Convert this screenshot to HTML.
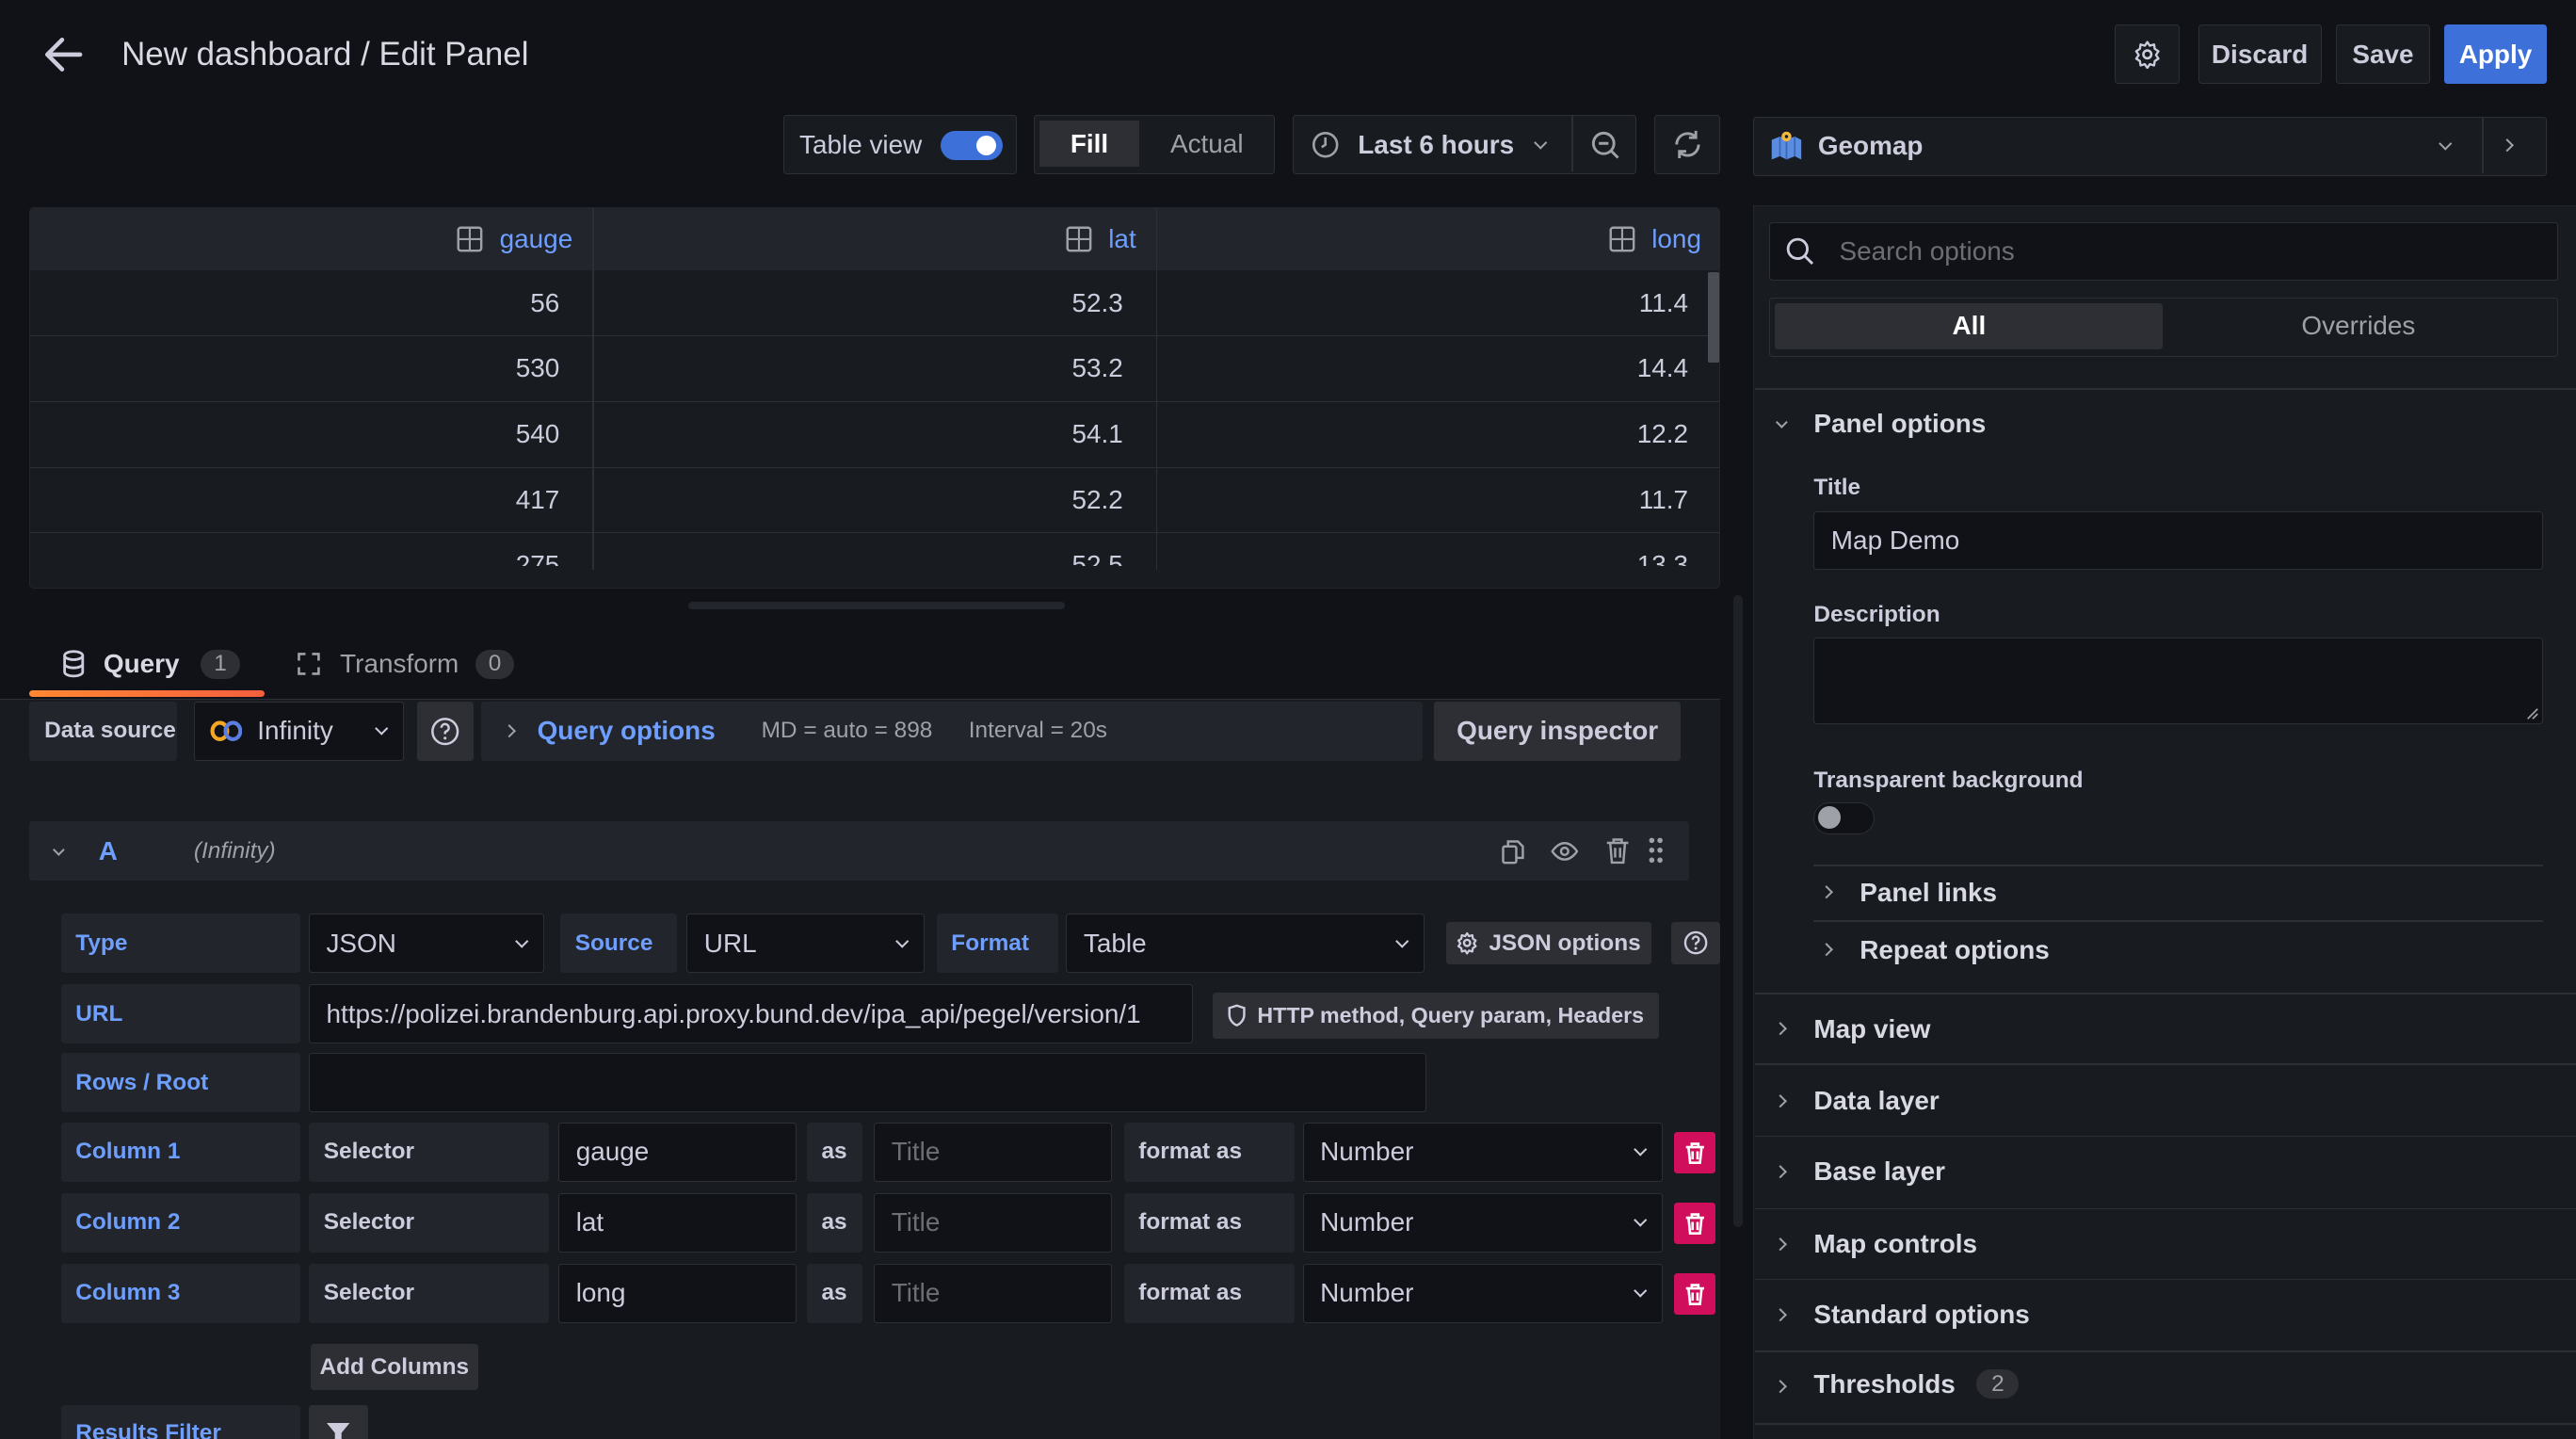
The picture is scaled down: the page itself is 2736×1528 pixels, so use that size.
<!DOCTYPE html>
<html><head><meta charset="utf-8">
<style>
html,body{margin:0;padding:0;background:#111217;overflow:hidden;width:2736px;height:1528px}
#r{zoom:1.7449;position:relative;width:1568px;height:876px;font-family:"Liberation Sans",sans-serif;color:#ccccdc;font-size:16px}
#r div{position:absolute;box-sizing:border-box}
.c{display:flex;align-items:center}
.btn{background:#181b1f;border:1px solid #2c2f36;border-radius:2px;justify-content:center}
.lbl{background:#22252b;border-radius:2px;color:#6e9fff;font-size:14px;font-weight:bold;padding-left:9px}
.wl{background:#22252b;border-radius:2px;color:#ccccdc;font-size:14px;font-weight:bold;padding-left:9px}
.inp{background:#111217;border:1px solid #2c2f36;border-radius:2px;padding-left:10px;font-size:16px}
.gb{background:#2d2f35;border-radius:2px;font-size:14px;font-weight:bold;justify-content:center;color:#ccccdc}
.chev{position:absolute;right:10px;top:50%;width:6px;height:6px;border-right:1.5px solid #ccccdc;border-bottom:1.5px solid #ccccdc;transform:translateY(-70%) rotate(45deg)}
.rc{width:6px;height:6px;border-right:1.5px solid #9fa1a8;border-bottom:1.5px solid #9fa1a8;transform:rotate(-45deg)}
.hl{height:1px;background:#2c2f36}
.del{background:#d10e5c;border-radius:2px;justify-content:center}
.row{justify-content:flex-end;padding-right:20px;font-size:16px;border-bottom:1px solid #2c2f36}
.sec{font-size:16px;font-weight:bold;color:#d8d9e3}
</style></head><body><div id="r">

<!-- header -->
<div style="left:26px;top:21px"><svg width="26" height="24" viewBox="0 0 26 24"><path d="M23 12H4M12 3 3 12l9 9" stroke="#ccccdc" stroke-width="2.6" fill="none" stroke-linecap="round" stroke-linejoin="round"/></svg></div>
<div style="left:74px;top:22px;font-size:20px;color:#d8d9e3">New dashboard / Edit Panel</div>
<div class="c btn" style="left:1287px;top:15px;width:40px;height:36px"><svg width="18" height="18" viewBox="0 0 24 24"><circle cx="12" cy="12" r="3.2" fill="none" stroke="#ccccdc" stroke-width="2"/><path d="M12 2l2 3 3.5-1 .5 3.5 3 2-2 3 2 3-3 2-.5 3.5-3.5-1-2 3-2-3-3.5 1-.5-3.5-3-2 2-3-2-3 3-2 .5-3.5 3.5 1z" fill="none" stroke="#ccccdc" stroke-width="1.8" stroke-linejoin="round"/></svg></div>
<div class="c btn" style="left:1338px;top:15px;width:75px;height:36px;font-weight:bold;color:#ccccdc">Discard</div>
<div class="c btn" style="left:1422px;top:15px;width:57px;height:36px;font-weight:bold">Save</div>
<div class="c" style="left:1488px;top:15px;width:62px;height:36px;background:#3d71d9;border-radius:2px;justify-content:center;color:#fff;font-weight:bold">Apply</div>

<!-- toolbar -->
<div class="c btn" style="left:477px;top:70px;width:142px;height:36px;justify-content:flex-start;padding-left:9px">Table view<div style="left:95px;top:9px;width:38px;height:18px;border-radius:9px;background:#3d71d9"><div style="left:22px;top:3px;width:12px;height:12px;border-radius:6px;background:#fff"></div></div></div>
<div class="btn" style="left:629px;top:70px;width:147px;height:36px"><div class="c" style="left:3px;top:3px;width:61px;height:28px;background:#2d2f35;justify-content:center;font-weight:bold;color:#fff">Fill</div><div class="c" style="left:70px;top:3px;width:70px;height:28px;justify-content:center;color:#9fa1a8">Actual</div></div>
<div class="c btn" style="left:787px;top:70px;width:209px;height:36px;justify-content:flex-start;padding-left:10px;font-weight:bold;color:#ccccdc"><svg width="18" height="18" viewBox="0 0 24 24" style="margin-right:11px"><circle cx="12" cy="12" r="9.5" fill="none" stroke="#9fa1a8" stroke-width="2"/><path d="M12 6v6l-3 2" stroke="#9fa1a8" stroke-width="2" fill="none"/></svg>Last 6 hours<div class="chev" style="left:147px;right:auto;border-color:#9fa1a8"></div><div style="left:169px;top:0;width:1px;height:34px;background:#2c2f36"></div><svg style="position:absolute;left:180px;top:8px" width="20" height="20" viewBox="0 0 24 24"><circle cx="10.5" cy="10.5" r="7.5" fill="none" stroke="#9fa1a8" stroke-width="2"/><path d="M7 10.5h7M16 16l5 5" stroke="#9fa1a8" stroke-width="2"/></svg></div>
<div class="c btn" style="left:1007px;top:70px;width:40px;height:36px"><svg width="20" height="20" viewBox="0 0 24 24"><path d="M4 12a8 8 0 0 1 14-5.3M20 12a8 8 0 0 1-14 5.3M18 2v5h-5M6 22v-5h5" fill="none" stroke="#9fa1a8" stroke-width="2"/></svg></div>
<div class="c btn" style="left:1067px;top:71px;width:483px;height:36px;justify-content:flex-start;padding-left:10px;font-weight:bold;color:#ccccdc"><svg width="20" height="20" viewBox="0 0 20 20" style="margin-right:9px"><path d="M1 6l5-2 4 2 5-2 4 2v12l-4-2-5 2-4-2-5 2z" fill="#5a8de0"/><path d="M6 4v12M10 6v12M15 4v12" stroke="#3a66b5" stroke-width="1"/><circle cx="10" cy="4" r="3" fill="#f5b73b"/><circle cx="10" cy="4" r="1" fill="#181b1f"/></svg>Geomap<div class="chev" style="left:418px;right:auto;border-color:#9fa1a8"></div><div style="left:443px;top:0;width:1px;height:34px;background:#2c2f36"></div><div class="rc" style="left:456px;top:14px"></div></div>

<!-- table -->
<div style="left:18px;top:126px;width:1029px;height:232px;background:#181b1f;border:1px solid #22252b;border-radius:3px;overflow:hidden">
 <div style="left:0;top:0;width:1029px;height:38px;background:#22252b"></div>
 <div style="left:342px;top:0;width:1px;height:220px;background:#2c2f36"></div>
 <div style="left:685px;top:0;width:1px;height:220px;background:#2c2f36"></div>
 <div class="c" style="left:0;top:0;width:342px;height:38px;justify-content:flex-end;padding-right:12px;color:#6e9fff"><svg width="16" height="16" viewBox="0 0 16 16" style="margin-right:10px"><rect x="1" y="1" width="14" height="14" rx="1.5" fill="none" stroke="#9fa1a8" stroke-width="1.4"/><path d="M8 1v14M1 8h14" stroke="#9fa1a8" stroke-width="1.2"/></svg>gauge</div>
 <div class="c" style="left:343px;top:0;width:342px;height:38px;justify-content:flex-end;padding-right:12px;color:#6e9fff"><svg width="16" height="16" viewBox="0 0 16 16" style="margin-right:10px"><rect x="1" y="1" width="14" height="14" rx="1.5" fill="none" stroke="#9fa1a8" stroke-width="1.4"/><path d="M8 1v14M1 8h14" stroke="#9fa1a8" stroke-width="1.2"/></svg>lat</div>
 <div class="c" style="left:686px;top:0;width:343px;height:38px;justify-content:flex-end;padding-right:12px;color:#6e9fff"><svg width="16" height="16" viewBox="0 0 16 16" style="margin-right:10px"><rect x="1" y="1" width="14" height="14" rx="1.5" fill="none" stroke="#9fa1a8" stroke-width="1.4"/><path d="M8 1v14M1 8h14" stroke="#9fa1a8" stroke-width="1.2"/></svg>long</div>
 <div style="left:0;top:38px;width:1029px;height:180px;overflow:hidden">
  <div class="c row" style="left:0;top:0;width:342px;height:40px">56</div><div class="c row" style="left:343px;top:0;width:342px;height:40px">52.3</div><div class="c row" style="left:686px;top:0;width:343px;height:40px">11.4</div>
  <div class="c row" style="left:0;top:40px;width:342px;height:40px">530</div><div class="c row" style="left:343px;top:40px;width:342px;height:40px">53.2</div><div class="c row" style="left:686px;top:40px;width:343px;height:40px">14.4</div>
  <div class="c row" style="left:0;top:80px;width:342px;height:40px">540</div><div class="c row" style="left:343px;top:80px;width:342px;height:40px">54.1</div><div class="c row" style="left:686px;top:80px;width:343px;height:40px">12.2</div>
  <div class="c row" style="left:0;top:120px;width:342px;height:40px">417</div><div class="c row" style="left:343px;top:120px;width:342px;height:40px">52.2</div><div class="c row" style="left:686px;top:120px;width:343px;height:40px">11.7</div>
  <div class="c row" style="left:0;top:160px;width:342px;height:40px;align-items:flex-start;padding-top:10px">275</div><div class="c row" style="left:343px;top:160px;width:342px;height:40px;align-items:flex-start;padding-top:10px">52.5</div><div class="c row" style="left:686px;top:160px;width:343px;height:40px;align-items:flex-start;padding-top:10px">13.3</div>
 </div>
 <div style="left:1021px;top:39px;width:7px;height:55px;background:#4b4d55;border-radius:1px"></div>
</div>
<div style="left:419px;top:366px;width:229px;height:5px;background:#22252b;border-radius:3px"></div>

<!-- tabs -->
<div class="c" style="left:38px;top:395px;font-size:16px;font-weight:bold;color:#d8d9e3"><svg width="14" height="17" viewBox="0 0 14 17" style="margin-right:11px"><ellipse cx="7" cy="3.5" rx="5.5" ry="2.5" fill="none" stroke="#ccccdc" stroke-width="1.6"/><path d="M1.5 3.5v10c0 1.4 2.5 2.5 5.5 2.5s5.5-1.1 5.5-2.5v-10M1.5 8.5c0 1.4 2.5 2.5 5.5 2.5s5.5-1.1 5.5-2.5" fill="none" stroke="#ccccdc" stroke-width="1.6"/></svg>Query<span style="margin-left:13px;background:#2d2f35;border-radius:10px;padding:1px 8px;font-size:14px;font-weight:normal;color:#9fa1a8">1</span></div>
<div class="c" style="left:180px;top:395px;font-size:16px;color:#9fa1a8"><svg width="16" height="16" viewBox="0 0 16 16" style="margin-right:11px"><path d="M2 6V2h4M14 10v4h-4M10 2h4v4M6 14H2v-4" fill="none" stroke="#9fa1a8" stroke-width="1.5"/></svg>Transform<span style="margin-left:10px;background:#2d2f35;border-radius:10px;padding:1px 8px;font-size:14px">0</span></div>
<div style="left:18px;top:420px;width:143px;height:4px;border-radius:2px;background:linear-gradient(90deg,#ff8833,#f55f3e)"></div>

<!-- query editor area -->
<div style="left:0;top:425px;width:1047px;height:451px;background:#181b1f;border-top:1px solid #2c2f36"></div>
<div style="left:1047px;top:360px;width:20px;height:516px;background:#111217"></div>
<div style="left:1055px;top:362px;width:6px;height:385px;background:#1e2126;border-radius:3px"></div>

<div class="c wl" style="left:18px;top:427px;width:90px;height:36px">Data source</div>
<div class="c inp" style="left:118px;top:427px;width:128px;height:36px;padding-left:9px"><svg width="20" height="14" viewBox="0 0 20 14" style="margin-right:9px"><ellipse cx="6" cy="7" rx="4.5" ry="5" fill="none" stroke="#f5a623" stroke-width="2.4"/><ellipse cx="14" cy="7" rx="4.5" ry="5" fill="none" stroke="#5a7de0" stroke-width="2.4"/></svg>Infinity<div class="chev"></div></div>
<div class="c gb" style="left:254px;top:427px;width:34px;height:36px"><svg width="18" height="18" viewBox="0 0 20 20"><circle cx="10" cy="10" r="8.5" fill="none" stroke="#ccccdc" stroke-width="1.6"/><path d="M7.5 7.5a2.5 2.5 0 1 1 3.3 2.4c-.6.3-.8.7-.8 1.3v.6" fill="none" stroke="#ccccdc" stroke-width="1.6"/><circle cx="10" cy="14.5" r="1" fill="#ccccdc"/></svg></div>
<div class="c" style="left:293px;top:427px;width:573px;height:36px;background:#22252b;border-radius:2px;padding-left:14px"><div class="rc" style="position:relative;left:0;top:0"></div><span style="margin-left:14px;color:#6e9fff;font-weight:bold">Query options</span><span style="margin-left:28px;color:#9fa1a8;font-size:14px">MD = auto = 898</span><span style="margin-left:22px;color:#9fa1a8;font-size:14px">Interval = 20s</span></div>
<div class="c gb" style="left:873px;top:427px;width:150px;height:36px;font-size:16px;background:#2d2f35">Query inspector</div>

<div class="c" style="left:18px;top:500px;width:1010px;height:36px;background:#22252b;border-radius:2px"><div class="chev" style="left:15px;right:auto;width:5px;height:5px;border-color:#9fa1a8"></div><span style="position:absolute;left:42px;color:#6e9fff;font-weight:bold">A</span><span style="position:absolute;left:100px;color:#9fa1a8;font-style:italic;font-size:14px">(Infinity)</span>
<svg style="position:absolute;left:895px;top:10px" width="16" height="16" viewBox="0 0 16 16"><rect x="2" y="5" width="8" height="10" rx="1" fill="none" stroke="#9fa1a8" stroke-width="1.4"/><path d="M5 5V2h6l3 3v7h-4" fill="none" stroke="#9fa1a8" stroke-width="1.4"/></svg>
<svg style="position:absolute;left:926px;top:10px" width="17" height="16" viewBox="0 0 17 16"><path d="M1 8s3-5 7.5-5S16 8 16 8s-3 5-7.5 5S1 8 1 8z" fill="none" stroke="#9fa1a8" stroke-width="1.4"/><circle cx="8.5" cy="8" r="2.2" fill="none" stroke="#9fa1a8" stroke-width="1.4"/></svg>
<svg style="position:absolute;left:959px;top:9px" width="15" height="17" viewBox="0 0 15 17"><path d="M1 4h13M5 4V2h5v2M3 4l1 12h7l1-12M6 7v6M9 7v6" fill="none" stroke="#9fa1a8" stroke-width="1.4"/></svg>
<svg style="position:absolute;left:985px;top:9px" width="10" height="17" viewBox="0 0 10 17"><g fill="#9fa1a8"><circle cx="2.5" cy="2.5" r="1.6"/><circle cx="7.5" cy="2.5" r="1.6"/><circle cx="2.5" cy="8.5" r="1.6"/><circle cx="7.5" cy="8.5" r="1.6"/><circle cx="2.5" cy="14.5" r="1.6"/><circle cx="7.5" cy="14.5" r="1.6"/></g></svg></div>

<!-- Type row -->
<div class="c lbl" style="left:37px;top:556px;width:146px;height:36px">Type</div>
<div class="c inp" style="left:188px;top:556px;width:143px;height:36px">JSON<div class="chev"></div></div>
<div class="c lbl" style="left:341px;top:556px;width:71px;height:36px">Source</div>
<div class="c inp" style="left:418px;top:556px;width:145px;height:36px">URL<div class="chev"></div></div>
<div class="c lbl" style="left:570px;top:556px;width:74px;height:36px">Format</div>
<div class="c inp" style="left:649px;top:556px;width:218px;height:36px">Table<div class="chev"></div></div>
<div class="c gb" style="left:880px;top:561px;width:125px;height:26px"><svg width="14" height="14" viewBox="0 0 24 24" style="margin-right:6px"><circle cx="12" cy="12" r="3.2" fill="none" stroke="#ccccdc" stroke-width="2.4"/><path d="M12 2l2 3 3.5-1 .5 3.5 3 2-2 3 2 3-3 2-.5 3.5-3.5-1-2 3-2-3-3.5 1-.5-3.5-3-2 2-3-2-3 3-2 .5-3.5 3.5 1z" fill="none" stroke="#ccccdc" stroke-width="2.2" stroke-linejoin="round"/></svg>JSON options</div>
<div class="c gb" style="left:1017px;top:561px;width:30px;height:26px"><svg width="15" height="15" viewBox="0 0 20 20"><circle cx="10" cy="10" r="8.5" fill="none" stroke="#ccccdc" stroke-width="1.8"/><path d="M7.5 7.5a2.5 2.5 0 1 1 3.3 2.4c-.6.3-.8.7-.8 1.3v.6" fill="none" stroke="#ccccdc" stroke-width="1.8"/><circle cx="10" cy="14.5" r="1.1" fill="#ccccdc"/></svg></div>

<!-- URL -->
<div class="c lbl" style="left:37px;top:599px;width:146px;height:36px">URL</div>
<div class="c inp" style="left:188px;top:599px;width:538px;height:36px">https://polizei.brandenburg.api.proxy.bund.dev/ipa_api/pegel/version/1</div>
<div class="c gb" style="left:738px;top:604px;width:272px;height:28px;font-size:13.3px"><svg width="11" height="14" viewBox="0 0 11 14" style="margin-right:7px"><path d="M5.5 1 1 2.5v4c0 3 2 5.5 4.5 6.5 2.5-1 4.5-3.5 4.5-6.5v-4z" fill="none" stroke="#ccccdc" stroke-width="1.4"/></svg>HTTP method, Query param, Headers</div>

<!-- rows root -->
<div class="c lbl" style="left:37px;top:641px;width:146px;height:36px">Rows / Root</div>
<div class="c inp" style="left:188px;top:641px;width:680px;height:36px"></div>

<!-- columns -->
<div class="c lbl" style="left:37px;top:683px;width:146px;height:36px">Column 1</div>
<div class="c wl" style="left:188px;top:683px;width:146px;height:36px">Selector</div>
<div class="c inp" style="left:340px;top:683px;width:145px;height:36px">gauge</div>
<div class="c wl" style="left:491px;top:683px;width:34px;height:36px">as</div>
<div class="c inp" style="left:532px;top:683px;width:145px;height:36px;color:#6c6e76">Title</div>
<div class="c wl" style="left:684px;top:683px;width:104px;height:36px">format as</div>
<div class="c inp" style="left:793px;top:683px;width:219px;height:36px">Number<div class="chev"></div></div>
<div class="c del" style="left:1019px;top:689px;width:25px;height:25px"><svg width="13" height="14" viewBox="0 0 13 14"><path d="M1 3.5h11M4.5 3.5V1.5h4v2M2.5 3.5l1 9.5h6l1-9.5M5 6v5M8 6v5" fill="none" stroke="#fff" stroke-width="1.5"/></svg></div>

<div class="c lbl" style="left:37px;top:726px;width:146px;height:36px">Column 2</div>
<div class="c wl" style="left:188px;top:726px;width:146px;height:36px">Selector</div>
<div class="c inp" style="left:340px;top:726px;width:145px;height:36px">lat</div>
<div class="c wl" style="left:491px;top:726px;width:34px;height:36px">as</div>
<div class="c inp" style="left:532px;top:726px;width:145px;height:36px;color:#6c6e76">Title</div>
<div class="c wl" style="left:684px;top:726px;width:104px;height:36px">format as</div>
<div class="c inp" style="left:793px;top:726px;width:219px;height:36px">Number<div class="chev"></div></div>
<div class="c del" style="left:1019px;top:732px;width:25px;height:25px"><svg width="13" height="14" viewBox="0 0 13 14"><path d="M1 3.5h11M4.5 3.5V1.5h4v2M2.5 3.5l1 9.5h6l1-9.5M5 6v5M8 6v5" fill="none" stroke="#fff" stroke-width="1.5"/></svg></div>

<div class="c lbl" style="left:37px;top:769px;width:146px;height:36px">Column 3</div>
<div class="c wl" style="left:188px;top:769px;width:146px;height:36px">Selector</div>
<div class="c inp" style="left:340px;top:769px;width:145px;height:36px">long</div>
<div class="c wl" style="left:491px;top:769px;width:34px;height:36px">as</div>
<div class="c inp" style="left:532px;top:769px;width:145px;height:36px;color:#6c6e76">Title</div>
<div class="c wl" style="left:684px;top:769px;width:104px;height:36px">format as</div>
<div class="c inp" style="left:793px;top:769px;width:219px;height:36px">Number<div class="chev"></div></div>
<div class="c del" style="left:1019px;top:775px;width:25px;height:25px"><svg width="13" height="14" viewBox="0 0 13 14"><path d="M1 3.5h11M4.5 3.5V1.5h4v2M2.5 3.5l1 9.5h6l1-9.5M5 6v5M8 6v5" fill="none" stroke="#fff" stroke-width="1.5"/></svg></div>

<div class="c gb" style="left:189px;top:818px;width:102px;height:28px">Add Columns</div>
<div class="lbl" style="left:37px;top:855px;width:146px;height:30px;padding-top:9px">Results Filter</div>
<div class="gb" style="left:188px;top:855px;width:36px;height:30px"><svg style="position:absolute;left:11px;top:11px" width="14" height="12" viewBox="0 0 14 12"><path d="M0 0h14L9 6v6H5V6z" fill="#ccccdc"/></svg></div>

<!-- right panel -->
<div style="left:1067px;top:125px;width:501px;height:751px;background:#181b1f;border:1px solid #22252b;border-right:none;border-bottom:none"></div>
<div class="c inp" style="left:1077px;top:135px;width:480px;height:36px;color:#6c6e76;padding-left:9px"><svg width="18" height="18" viewBox="0 0 20 20" style="margin-right:15px"><circle cx="8.5" cy="8.5" r="6.5" fill="none" stroke="#ccccdc" stroke-width="1.8"/><path d="M13.5 13.5l5 5" stroke="#ccccdc" stroke-width="1.8"/></svg>Search options</div>
<div style="left:1077px;top:181px;width:480px;height:36px;border:1px solid #2c2f36;border-radius:2px"><div class="c" style="left:3px;top:3px;width:236px;height:28px;background:#2d2f35;border-radius:2px;justify-content:center;font-weight:bold;color:#fff">All</div><div class="c" style="left:240px;top:3px;width:236px;height:28px;justify-content:center;color:#9fa1a8">Overrides</div></div>
<div class="hl" style="left:1068px;top:236px;width:500px"></div>

<div class="chev" style="left:1082px;right:auto;top:258px;width:5px;height:5px;border-color:#9fa1a8"></div>
<div class="sec" style="left:1104px;top:249px">Panel options</div>
<div style="left:1104px;top:289px;font-size:14px;font-weight:bold">Title</div>
<div class="c inp" style="left:1104px;top:311px;width:444px;height:36px">Map Demo</div>
<div style="left:1104px;top:366px;font-size:14px;font-weight:bold">Description</div>
<div class="inp" style="left:1104px;top:388px;width:444px;height:53px"><svg style="position:absolute;right:2px;bottom:2px" width="8" height="8" viewBox="0 0 8 8"><path d="M1 7 7 1M4 7l3-3" stroke="#9fa1a8" stroke-width="1"/></svg></div>
<div style="left:1104px;top:467px;font-size:14px;font-weight:bold">Transparent background</div>
<div style="left:1104px;top:488px;width:37px;height:20px;border-radius:10px;background:#111217;border:1px solid #2c2f36"><div style="left:2px;top:2px;width:14px;height:14px;border-radius:7px;background:#9fa1a8"></div></div>
<div class="hl" style="left:1104px;top:526px;width:444px"></div>
<div class="rc" style="left:1109px;top:540px"></div><div class="sec" style="left:1132px;top:534px">Panel links</div>
<div class="hl" style="left:1104px;top:560px;width:444px"></div>
<div class="rc" style="left:1109px;top:575px"></div><div class="sec" style="left:1132px;top:569px">Repeat options</div>
<div class="hl" style="left:1068px;top:604px;width:500px"></div>

<div class="rc" style="left:1081px;top:623px"></div><div class="sec" style="left:1104px;top:617px">Map view</div>
<div class="hl" style="left:1068px;top:647px;width:500px"></div>
<div class="rc" style="left:1081px;top:667px"></div><div class="sec" style="left:1104px;top:661px">Data layer</div>
<div class="hl" style="left:1068px;top:691px;width:500px"></div>
<div class="rc" style="left:1081px;top:710px"></div><div class="sec" style="left:1104px;top:704px">Base layer</div>
<div class="hl" style="left:1068px;top:735px;width:500px"></div>
<div class="rc" style="left:1081px;top:754px"></div><div class="sec" style="left:1104px;top:748px">Map controls</div>
<div class="hl" style="left:1068px;top:778px;width:500px"></div>
<div class="rc" style="left:1081px;top:797px"></div><div class="sec" style="left:1104px;top:791px">Standard options</div>
<div class="hl" style="left:1068px;top:822px;width:500px"></div>
<div class="rc" style="left:1081px;top:841px"></div><div class="sec c" style="left:1104px;top:833px">Thresholds<span style="margin-left:13px;background:#2d2f35;border-radius:10px;padding:1px 9px;font-size:14px;font-weight:normal;color:#9fa1a8">2</span></div>
<div class="hl" style="left:1068px;top:866px;width:500px"></div>

</div></body></html>
